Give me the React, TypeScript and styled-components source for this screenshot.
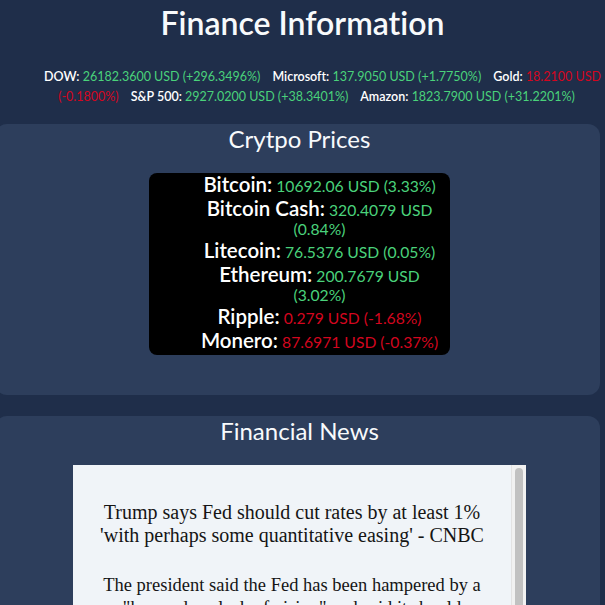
import React from 'react';
import styled, { createGlobalStyle } from 'styled-components';

const Global = createGlobalStyle`
  html, body { margin: 0; padding: 0; background: #1f2e4a; }
  body {
    font-family: Lato, "Open Sans", sans-serif;
    color: #f8fafc;
    overflow: hidden;
    font-variant-ligatures: none;
  }
`;

const Page = styled.div`
  padding-top: 4px;
`;

const Title = styled.h1`
  margin: 0;
  font-size: 32px;
  line-height: 38px;
  font-weight: 600;
  text-align: center;
`;

const Ticker = styled.ul`
  margin: 25px 0 0;
  padding: 0 0 0 40px;
  list-style: none;
  font-size: 12.5px;
  line-height: 20px;
  text-align: center;
`;

const TickerItem = styled.li`
  display: inline;
  margin-right: 12px;
`;

const Label = styled.span`
  font-weight: 600;
  color: #fff;
`;

const Value = styled.span<{ $up: boolean }>`
  color: ${(p) => (p.$up ? '#4ad27b' : '#d3061f')};
`;

const Card = styled.section<{ $gap: number }>`
  margin: ${(p) => p.$gap}px 5px 0 -5px;
  padding: 0 0 40px 4px;
  background: #2d3e5c;
  border-radius: 12px;
`;

const CardTitle = styled.h2`
  margin: 0;
  font-size: 24px;
  font-weight: 400;
  line-height: 29px;
  text-align: center;
`;

const CryptoList = styled.ul`
  box-sizing: border-box;
  width: 301px;
  margin: 20px auto 0;
  padding: 0 0 3px 40px;
  list-style: none;
  background: #000;
  border-radius: 8px;
  font-size: 15.7px;
  line-height: 19px;
  text-align: center;
`;

const CryptoRow = styled.li`
  padding: 0 6px;
`;

const CryptoName = styled.span`
  font-size: 20.5px;
  line-height: 23.5px;
  font-weight: 600;
  color: #fff;
`;

const NewsBox = styled.div`
  display: flex;
  width: 453px;
  height: 330px;
  margin: 20px auto 0;
  background: #f0f4f8;
  overflow: hidden;
`;

const NewsContent = styled.div`
  flex: 1;
  padding: 0 20px;
  color: #151515;
  font-family: "Liberation Serif", "DejaVu Serif", serif;
  text-align: center;
`;

const ScrollTrack = styled.div`
  flex: 0 0 14px;
  background: #f1f1f1;
  border-left: 1px solid #e3e3e3;
`;

const ScrollThumb = styled.div`
  width: 8px;
  height: 220px;
  margin: 3px auto 0;
  border-radius: 4px;
  background: #c1c1c1;
`;

const Headline = styled.h3`
  margin: 36px 0 0;
  font-size: 20px;
  font-weight: 400;
  line-height: 23px;
`;

const Summary = styled.p`
  margin: 27px 0 0;
  font-size: 18.5px;
  line-height: 23px;
`;

const stocks = [
  { name: 'DOW', value: '26182.3600 USD (+296.3496%)', up: true },
  { name: 'Microsoft', value: '137.9050 USD (+1.7750%)', up: true },
  { name: 'Gold', value: '18.2100 USD (-0.1800%)', up: false },
  { name: 'S&P 500', value: '2927.0200 USD (+38.3401%)', up: true },
  { name: 'Amazon', value: '1823.7900 USD (+31.2201%)', up: true },
];

const cryptos = [
  { name: 'Bitcoin', value: '10692.06 USD (3.33%)', up: true },
  { name: 'Bitcoin Cash', value: '320.4079 USD (0.84%)', up: true },
  { name: 'Litecoin', value: '76.5376 USD (0.05%)', up: true },
  { name: 'Ethereum', value: '200.7679 USD (3.02%)', up: true },
  { name: 'Ripple', value: '0.279 USD (-1.68%)', up: false },
  { name: 'Monero', value: '87.6971 USD (-0.37%)', up: false },
];

const news = [
  {
    title: "Trump says Fed should cut rates by at least 1% 'with perhaps some quantitative easing' - CNBC",
    text: 'The president said the Fed has been hampered by a "horrendous lack of vision" and said it should institute a rate cut of at least 100 basis points.',
  },
  {
    title: 'Stocks rise as investors weigh trade talks and economic data - Reuters',
    text: 'Wall Street gained ground as markets looked ahead to the next round of negotiations between Washington and Beijing.',
  },
];

export default function App() {
  return (
    <Page>
      <Global />
      <Title>Finance Information</Title>
      <Ticker>
        {stocks.map((s) => (
          <TickerItem key={s.name}>
            <Label>{s.name}:</Label> <Value $up={s.up}>{s.value}</Value>
          </TickerItem>
        ))}
      </Ticker>
      <Card $gap={17}>
        <CardTitle>Crytpo Prices</CardTitle>
        <CryptoList>
          {cryptos.map((c) => (
            <CryptoRow key={c.name}>
              <CryptoName>{c.name}:</CryptoName> <Value $up={c.up}>{c.value}</Value>
            </CryptoRow>
          ))}
        </CryptoList>
      </Card>
      <Card $gap={21}>
        <CardTitle>Financial News</CardTitle>
        <NewsBox>
          <NewsContent>
            {news.map((n) => (
              <React.Fragment key={n.title}>
                <Headline>{n.title}</Headline>
                <Summary>{n.text}</Summary>
              </React.Fragment>
            ))}
          </NewsContent>
          <ScrollTrack>
            <ScrollThumb />
          </ScrollTrack>
        </NewsBox>
      </Card>
    </Page>
  );
}
